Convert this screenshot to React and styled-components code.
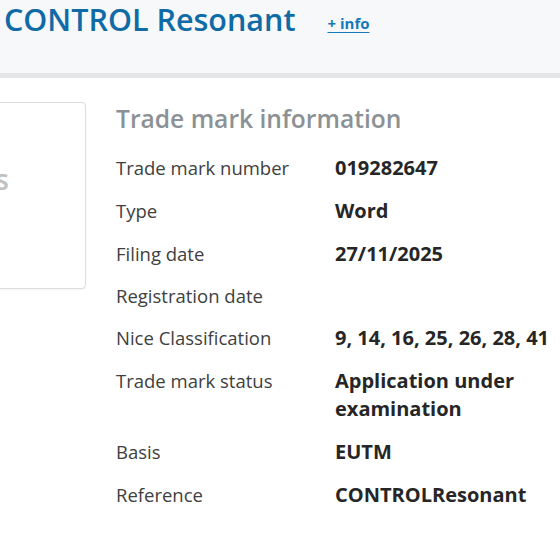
import React from 'react';
import styled, { createGlobalStyle } from 'styled-components';

const GlobalStyle = createGlobalStyle`
  html, body {
    margin: 0;
    padding: 0;
    background: #fff;
    overflow: hidden;
  }
  body {
    font-family: "Open Sans", "Liberation Sans", sans-serif;
  }
`;

const Page = styled.div`
  width: 560px;
  height: 560px;
  overflow: hidden;
  background: #fff;
`;

const Header = styled.header`
  height: 73px;
  background: #f7f8f9;
  border-bottom: 5px solid #e4e5e6;
  display: flex;
  align-items: flex-start;
  padding: 0 0 0 4px;
`;

const Title = styled.h1`
  margin: 0;
  font-size: 30.5px;
  font-weight: 600;
  color: #0f6ba6;
  line-height: 38px;
  white-space: nowrap;
  flex-shrink: 0;
`;

const InfoLink = styled.a`
  margin: 13px 0 0 32px;
  font-size: 15px;
  font-weight: 700;
  color: #1778b8;
  text-decoration: underline;
  text-underline-offset: 3px;
  line-height: 20px;
  white-space: nowrap;
  flex-shrink: 0;
`;

const Body = styled.main`
  display: flex;
  align-items: flex-start;
  padding-top: 24px;
`;

const ImageCard = styled.div`
  width: 200px;
  height: 187px;
  margin-left: -114px;
  border: 1px solid #dcdcdc;
  border-radius: 4px;
  box-shadow: 0 1px 2px rgba(0, 0, 0, 0.05);
  display: flex;
  align-items: center;
  justify-content: flex-end;
  padding-right: 76px;
  padding-bottom: 34px;
  box-sizing: border-box;
  flex-shrink: 0;
`;

const CardText = styled.span`
  font-size: 28px;
  font-weight: 600;
  color: #c0c0c0;
`;

const Info = styled.section`
  margin-left: 30px;
  flex: 1;
`;

const Heading = styled.h2`
  margin: 0 0 12px;
  font-size: 24.6px;
  font-weight: 600;
  color: #8c9196;
  line-height: 34px;
  white-space: nowrap;
`;

const Row = styled.div`
  display: grid;
  grid-template-columns: 219px 1fr;
  padding: ${p => (p.$tight ? '5px 0 8px' : '6px 0 9px')};
  line-height: 28px;
`;

const Label = styled.div`
  font-size: 18.5px;
  color: #404040;
  white-space: nowrap;
`;

const Value = styled.div`
  font-size: 20px;
  font-weight: 700;
  color: #262626;
  white-space: nowrap;
`;

const rows = [
  ['Trade mark number', '019282647'],
  ['Type', 'Word'],
  ['Filing date', '27/11/2025'],
  ['Registration date', '', true],
  ['Nice Classification', '9, 14, 16, 25, 26, 28, 41'],
  ['Trade mark status', <>Application under<br />examination</>],
  ['Basis', 'EUTM'],
  ['Reference', 'CONTROLResonant'],
];

export default function App() {
  return (
    <Page>
      <GlobalStyle />
      <Header>
        <Title>CONTROL Resonant</Title>
        <InfoLink href="#">+ info</InfoLink>
      </Header>
      <Body>
        <ImageCard>
          <CardText>s</CardText>
        </ImageCard>
        <Info>
          <Heading>Trade mark information</Heading>
          {rows.map(([label, value, tight], i) => (
            <Row key={i} $tight={tight}>
              <Label>{label}</Label>
              <Value>{value}</Value>
            </Row>
          ))}
        </Info>
      </Body>
    </Page>
  );
}
